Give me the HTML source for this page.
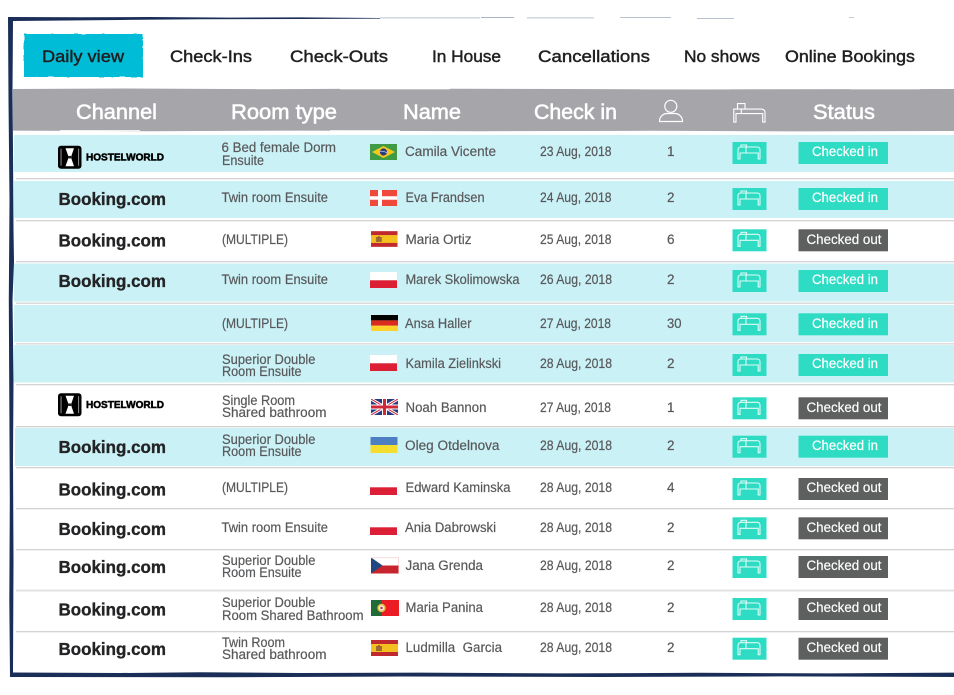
<!DOCTYPE html>
<html><head><meta charset="utf-8"><style>
html,body{margin:0;padding:0;background:#fff;width:954px;height:695px;overflow:hidden}
svg{display:block}
text{font-family:"Liberation Sans",sans-serif}
.n{font-size:17px;fill:#1f1f21;stroke:#1f1f21;stroke-width:.45px}
.h{font-size:21px;fill:#fff;stroke:#fff;stroke-width:.55px}
.t{font-size:13.5px;fill:#58595b;stroke:#58595b;stroke-width:.2px}
.w{font-size:13.5px;fill:#fff;stroke:#fff;stroke-width:.18px}
.b{font-size:17.5px;font-weight:bold;fill:#232325;stroke:#232325;stroke-width:.35px}
.hw{font-size:10px;font-weight:bold;fill:#000;stroke:#000;stroke-width:.5px}
</style></head><body>
<svg xmlns="http://www.w3.org/2000/svg" width="954" height="695" viewBox="0 0 954 695">
<defs>
<filter id="s" filterUnits="userSpaceOnUse" x="0" y="0" width="954" height="695"><feTurbulence type="fractalNoise" baseFrequency=".1 .2" numOctaves="2" seed="9"/><feDisplacementMap in="SourceGraphic" scale="1.6" xChannelSelector="R" yChannelSelector="G"/></filter>
<g id="bd" fill="none" stroke="#fff" stroke-opacity=".85" stroke-width="1.1"><path d="M5.5 17V8Q5.5 5 8.5 5H24.5Q27.5 5 27.5 8V17H25.7V11H7.5V17ZM8.5 5V3H14V5M13.5 5V11"/></g>
<g id="hb" fill="none" stroke="#fff" stroke-width="1.1"><path d="M.8 19.5V6.5H28Q32 6.5 32 10V19.5H29.7V11H3V19.5ZM4.5 6.5V1H12V6.5M8.3 6.5V11"/></g>
<g id="hwl"><rect width="23.5" height="23" rx="3" fill="#000"/><path d="M7.5 2.5H16L13.6 9.5V13.5L16 20.5H7.5L10 13.5V9.5Z" fill="#fff"/><path d="M10 10.2H13.6V12.8H10Z" fill="#222"/><rect x="2.5" y="3" width="1.1" height="17" fill="#888"/><rect x="20" y="3" width="1.1" height="17" fill="#888"/></g>
<symbol id="br" viewBox="0 0 27 16" overflow="visible"><rect width="27" height="16" fill="#3f9c45"/><path d="M13.5 2 25 8 13.5 14 2 8Z" fill="#f4c81e"/><circle cx="13.5" cy="8" r="3.6" fill="#2c3a86"/><path d="M10 7.3Q14 6.8 17 9" stroke="#dfe5f0" stroke-width=".6" fill="none"/></symbol>
<symbol id="dk" viewBox="0 0 27 16"><rect width="27" height="16" fill="#f1483c"/><path d="M8 0H12V16H8ZM0 6.2H27V9.8H0Z" fill="#fff"/></symbol>
<symbol id="es" viewBox="0 0 27 16"><rect width="27" height="16" fill="#c02a2e"/><rect y="4" width="27" height="8" fill="#f4c020"/><rect x="5" y="6" width="6" height="5" fill="#9c6b2f"/><rect x="7" y="5.3" width="2" height="1.5" fill="#b5422a"/></symbol>
<symbol id="pl" viewBox="0 0 27 16"><rect width="27" height="8.3" fill="#fff"/><rect y="8.3" width="27" height="7.7" fill="#dc1f35"/></symbol>
<symbol id="de" viewBox="0 0 27 16"><rect width="27" height="5.4" fill="#000"/><rect y="5.4" width="27" height="5.3" fill="#dd2a1f"/><rect y="10.7" width="27" height="5.3" fill="#fdd32b"/></symbol>
<symbol id="uk" viewBox="0 0 27 16"><rect width="27" height="16" fill="#2a3a7c"/><path d="M0 0 27 16M27 0 0 16" stroke="#fff" stroke-width="3"/><path d="M0 0 27 16M27 0 0 16" stroke="#d0283a" stroke-width="1"/><path d="M13.5 0V16M0 8H27" stroke="#fff" stroke-width="5"/><path d="M13.5 0V16M0 8H27" stroke="#d0283a" stroke-width="3"/></symbol>
<symbol id="ua" viewBox="0 0 27 16"><rect width="27" height="8" fill="#4f7fc3"/><rect y="8" width="27" height="8" fill="#f5dd2e"/></symbol>
<symbol id="cz" viewBox="0 0 28 16"><rect width="28" height="8" fill="#fff"/><rect y="8" width="28" height="8" fill="#c8242e"/><path d="M0 0 11.5 8 0 16Z" fill="#20477f"/><path d="M0 .3H27.7V15.7" fill="none" stroke="#f2c5cb" stroke-width=".6"/></symbol>
<symbol id="pt" viewBox="0 0 28 16"><rect width="28" height="16" fill="#eb1c24"/><rect width="11" height="16" fill="#226a37"/><circle cx="10.5" cy="8" r="4.2" fill="#e6c34a"/><circle cx="10.5" cy="8" r="2.6" fill="#f3e9e6"/><circle cx="10.5" cy="8" r="1.2" fill="#b8323a"/></symbol>
</defs>

<rect width="954" height="695" fill="#fff"/>

<!-- frame -->
<path fill="#1a2e57" d="M8 17 L80 17.3 L150 17 L230 17.6 L300 17.4 L380 18 L380 18.6 L300 19 L200 19.2 L120 20 L13 21 L12.5 90 L13 150 L13.5 230 L14 262 L12.5 300 L13.5 380 L13 460 L13.5 560 L13 672.5 L120 673 L200 672.3 L300 673 L420 672.6 L560 673.4 L700 672.8 L830 673.4 L954 672.6 V677 L780 676.4 L600 677 L400 676.5 L230 677.2 L10 677 L9.3 600 L9.8 500 L9.3 400 L8.8 300 L9.5 200 L8.5 100Z"/>
<g fill="#a9b3c6">
<rect x="380" y="17.5" width="100" height=".8"/><rect x="481" y="17" width="33" height="1"/><rect x="527" y="17.5" width="67" height=".8"/><rect x="620" y="17" width="51" height=".8"/><rect x="697" y="18" width="37" height=".8"/><rect x="849" y="17" width="5" height=".7"/>
</g>

<!-- tab -->
<rect filter="url(#s)" x="24" y="34" width="119" height="43" fill="#00bcd6"/>
<text class="n" x="42" y="62" textLength="82" lengthAdjust="spacingAndGlyphs">Daily view</text>
<text class="n" x="170" y="62" textLength="82" lengthAdjust="spacingAndGlyphs">Check-Ins</text>
<text class="n" x="290" y="62" textLength="98" lengthAdjust="spacingAndGlyphs">Check-Outs</text>
<text class="n" x="432" y="62" textLength="69" lengthAdjust="spacingAndGlyphs">In House</text>
<text class="n" x="538" y="62" textLength="112" lengthAdjust="spacingAndGlyphs">Cancellations</text>
<text class="n" x="684" y="62" textLength="76" lengthAdjust="spacingAndGlyphs">No shows</text>
<text class="n" x="785" y="62" textLength="130" lengthAdjust="spacingAndGlyphs">Online Bookings</text>

<!-- header -->
<path fill="#a6a6aa" d="M13 89 L120 88.5 L260 89.2 L400 88.6 L560 89 L700 89.4 L954 89 V131 L800 131.4 L650 130.8 L480 131.2 L300 130.6 L150 131.2 L13 130.6Z"/>
<g fill="#fff"><rect x="340" y="88.5" width="110" height=".8"/><rect x="640" y="88.6" width="90" height=".7"/><rect x="850" y="88.5" width="70" height=".8"/><rect x="60" y="130" width="80" height=".8"/><rect x="330" y="130.2" width="70" height=".7"/></g>
<text class="h" x="76" y="119" textLength="81" lengthAdjust="spacingAndGlyphs">Channel</text>
<text class="h" x="231" y="119" textLength="106" lengthAdjust="spacingAndGlyphs">Room type</text>
<text class="h" x="403" y="119" textLength="58" lengthAdjust="spacingAndGlyphs">Name</text>
<text class="h" x="534" y="119" textLength="83" lengthAdjust="spacingAndGlyphs">Check in</text>
<text class="h" x="813" y="119" textLength="62" lengthAdjust="spacingAndGlyphs">Status</text>
<g fill="none" stroke="#fff" stroke-width="1.2"><circle cx="670.8" cy="106.3" r="6"/><path d="M659.5 121.5C659.5 116 664 113.5 667 113.5H675C678 113.5 682.5 116 682.5 121.5Z"/></g>
<use href="#hb" x="733" y="102.6"/>

<!-- row backgrounds -->
<g fill="#caf1f6">
<rect x="14" y="135" width="940" height="37"/>
<rect x="14" y="181" width="940" height="37"/>
<rect x="14" y="263.5" width="940" height="38"/>
<rect x="14" y="305" width="940" height="37"/>
<rect x="14" y="345" width="940" height="37.5"/>
<rect x="15" y="428" width="939" height="38"/>
</g>
<g fill="#d3d3d6">
<rect x="16" y="178" width="938" height="1.3"/>
<rect x="16" y="220" width="938" height="1.3"/>
<rect x="16" y="261" width="938" height="1.3"/>
<rect x="16" y="302.5" width="938" height="1.3"/>
<rect x="16" y="343" width="938" height="1.6" fill="#dedee0"/>
<rect x="16" y="384" width="938" height="1.3"/>
<rect x="16" y="426" width="938" height="1.3"/>
<rect x="16" y="467" width="938" height="1.3"/>
<rect x="16" y="508" width="938" height="1.3"/>
<rect x="16" y="549" width="938" height="1.3"/>
<rect x="16" y="589.5" width="938" height="2" fill="#e2e2e4"/>
<rect x="16" y="631" width="938" height="1.3"/>
</g>

<!-- channel logos -->
<use href="#hwl" x="58" y="145.7"/>
<text class="hw" x="86" y="160.3" textLength="78" lengthAdjust="spacingAndGlyphs">HOSTELWORLD</text>
<use href="#hwl" x="58" y="393.2"/>
<text class="hw" x="86" y="408" textLength="78" lengthAdjust="spacingAndGlyphs">HOSTELWORLD</text>
<text class="b" x="58.5" y="205" textLength="107.5" lengthAdjust="spacingAndGlyphs">Booking.com</text>
<text class="b" x="58.5" y="246.5" textLength="107.5" lengthAdjust="spacingAndGlyphs">Booking.com</text>
<text class="b" x="58.5" y="287" textLength="107.5" lengthAdjust="spacingAndGlyphs">Booking.com</text>
<text class="b" x="58.5" y="453" textLength="107.5" lengthAdjust="spacingAndGlyphs">Booking.com</text>
<text class="b" x="58.5" y="495.5" textLength="107.5" lengthAdjust="spacingAndGlyphs">Booking.com</text>
<text class="b" x="58.5" y="535" textLength="107.5" lengthAdjust="spacingAndGlyphs">Booking.com</text>
<text class="b" x="58.5" y="573" textLength="107.5" lengthAdjust="spacingAndGlyphs">Booking.com</text>
<text class="b" x="58.5" y="615.5" textLength="107.5" lengthAdjust="spacingAndGlyphs">Booking.com</text>
<text class="b" x="58.5" y="655" textLength="107.5" lengthAdjust="spacingAndGlyphs">Booking.com</text>

<!-- room type -->
<text class="t" x="221.5" y="152" textLength="114.5" lengthAdjust="spacingAndGlyphs">6 Bed female Dorm</text>
<text class="t" x="222" y="165" textLength="42" lengthAdjust="spacingAndGlyphs">Ensuite</text>
<text class="t" x="221.5" y="202" textLength="106.5" lengthAdjust="spacingAndGlyphs">Twin room Ensuite</text>
<text class="t" x="222" y="244" textLength="66" lengthAdjust="spacingAndGlyphs">(MULTIPLE)</text>
<text class="t" x="221.5" y="284" textLength="106.5" lengthAdjust="spacingAndGlyphs">Twin room Ensuite</text>
<text class="t" x="222" y="328" textLength="66" lengthAdjust="spacingAndGlyphs">(MULTIPLE)</text>
<text class="t" x="222" y="364" textLength="93.5" lengthAdjust="spacingAndGlyphs">Superior Double</text>
<text class="t" x="222" y="376" textLength="79.5" lengthAdjust="spacingAndGlyphs">Room Ensuite</text>
<text class="t" x="222" y="405" textLength="73" lengthAdjust="spacingAndGlyphs">Single Room</text>
<text class="t" x="222" y="417" textLength="104.5" lengthAdjust="spacingAndGlyphs">Shared bathroom</text>
<text class="t" x="222" y="444" textLength="93.5" lengthAdjust="spacingAndGlyphs">Superior Double</text>
<text class="t" x="222" y="456" textLength="79.5" lengthAdjust="spacingAndGlyphs">Room Ensuite</text>
<text class="t" x="222" y="492" textLength="66" lengthAdjust="spacingAndGlyphs">(MULTIPLE)</text>
<text class="t" x="221.5" y="532" textLength="106.5" lengthAdjust="spacingAndGlyphs">Twin room Ensuite</text>
<text class="t" x="222" y="565" textLength="93.5" lengthAdjust="spacingAndGlyphs">Superior Double</text>
<text class="t" x="222" y="577" textLength="79.5" lengthAdjust="spacingAndGlyphs">Room Ensuite</text>
<text class="t" x="222" y="607" textLength="93.5" lengthAdjust="spacingAndGlyphs">Superior Double</text>
<text class="t" x="222" y="620" textLength="141.5" lengthAdjust="spacingAndGlyphs">Room Shared Bathroom</text>
<text class="t" x="222" y="647" textLength="63" lengthAdjust="spacingAndGlyphs">Twin Room</text>
<text class="t" x="222" y="659" textLength="104.5" lengthAdjust="spacingAndGlyphs">Shared bathroom</text>

<!-- flags -->
<use href="#br" x="370" y="144" width="27" height="16"/>
<use href="#dk" x="370" y="190" width="27" height="16"/>
<use href="#es" x="371" y="231" width="26.5" height="16"/>
<use href="#pl" x="370" y="272" width="27" height="16"/>
<use href="#de" x="371" y="315" width="27" height="16"/>
<use href="#pl" x="370" y="355" width="27" height="16"/>
<use href="#uk" x="371" y="399" width="27" height="16"/>
<use href="#ua" x="370.5" y="437" width="27" height="16"/>
<use href="#pl" x="370" y="479" width="27" height="16"/>
<use href="#pl" x="370" y="519" width="27" height="16"/>
<use href="#cz" x="371" y="557.5" width="28" height="16"/>
<use href="#pt" x="371" y="600" width="28" height="16"/>
<use href="#es" x="371" y="640" width="27" height="16"/>

<!-- names -->
<text class="t" x="405" y="156" textLength="91" lengthAdjust="spacingAndGlyphs">Camila Vicente</text>
<text class="t" x="405.5" y="202" textLength="79" lengthAdjust="spacingAndGlyphs">Eva Frandsen</text>
<text class="t" x="405.5" y="244" textLength="66" lengthAdjust="spacingAndGlyphs">Maria Ortiz</text>
<text class="t" x="405.5" y="284" textLength="114" lengthAdjust="spacingAndGlyphs">Marek Skolimowska</text>
<text class="t" x="405" y="328" textLength="66.5" lengthAdjust="spacingAndGlyphs">Ansa Haller</text>
<text class="t" x="405.5" y="368" textLength="95.5" lengthAdjust="spacingAndGlyphs">Kamila Zielinkski</text>
<text class="t" x="405.5" y="412" textLength="81" lengthAdjust="spacingAndGlyphs">Noah Bannon</text>
<text class="t" x="405" y="450" textLength="94.5" lengthAdjust="spacingAndGlyphs">Oleg Otdelnova</text>
<text class="t" x="405.5" y="492" textLength="105" lengthAdjust="spacingAndGlyphs">Edward Kaminska</text>
<text class="t" x="405" y="532" textLength="91" lengthAdjust="spacingAndGlyphs">Ania Dabrowski</text>
<text class="t" x="405.5" y="570" textLength="77.5" lengthAdjust="spacingAndGlyphs">Jana Grenda</text>
<text class="t" x="405.5" y="612" textLength="77.5" lengthAdjust="spacingAndGlyphs">Maria Panina</text>
<text class="t" x="405.5" y="652" textLength="96.5" lengthAdjust="spacingAndGlyphs">Ludmilla&#160; Garcia</text>

<!-- dates -->
<text class="t" x="540" y="156" textLength="71.5" lengthAdjust="spacingAndGlyphs">23 Aug, 2018</text>
<text class="t" x="540" y="202" textLength="71.5" lengthAdjust="spacingAndGlyphs">24 Aug, 2018</text>
<text class="t" x="540" y="244" textLength="71.5" lengthAdjust="spacingAndGlyphs">25 Aug, 2018</text>
<text class="t" x="540" y="284" textLength="72" lengthAdjust="spacingAndGlyphs">26 Aug, 2018</text>
<text class="t" x="540" y="328" textLength="71" lengthAdjust="spacingAndGlyphs">27 Aug, 2018</text>
<text class="t" x="540" y="368" textLength="72" lengthAdjust="spacingAndGlyphs">28 Aug, 2018</text>
<text class="t" x="540" y="412" textLength="71" lengthAdjust="spacingAndGlyphs">27 Aug, 2018</text>
<text class="t" x="540" y="450" textLength="72" lengthAdjust="spacingAndGlyphs">28 Aug, 2018</text>
<text class="t" x="540" y="492" textLength="72" lengthAdjust="spacingAndGlyphs">28 Aug, 2018</text>
<text class="t" x="540" y="532" textLength="72" lengthAdjust="spacingAndGlyphs">28 Aug, 2018</text>
<text class="t" x="540" y="570" textLength="72" lengthAdjust="spacingAndGlyphs">28 Aug, 2018</text>
<text class="t" x="540" y="612" textLength="72" lengthAdjust="spacingAndGlyphs">28 Aug, 2018</text>
<text class="t" x="540" y="652" textLength="72" lengthAdjust="spacingAndGlyphs">28 Aug, 2018</text>

<!-- persons -->
<text class="t" x="667" y="156">1</text>
<text class="t" x="667" y="202">2</text>
<text class="t" x="667" y="244">6</text>
<text class="t" x="667" y="284">2</text>
<text class="t" x="667" y="328" textLength="14.5" lengthAdjust="spacingAndGlyphs">30</text>
<text class="t" x="667" y="368">2</text>
<text class="t" x="667" y="412">1</text>
<text class="t" x="667" y="450">2</text>
<text class="t" x="667" y="492">4</text>
<text class="t" x="667" y="532">2</text>
<text class="t" x="667" y="570">2</text>
<text class="t" x="667" y="612">2</text>
<text class="t" x="667" y="652">2</text>

<!-- bed buttons -->
<g fill="#2edcc4">
<rect x="732.5" y="142" width="34" height="22"/>
<rect x="732.5" y="188" width="34" height="22"/>
<rect x="732.5" y="229.3" width="34" height="22"/>
<rect x="732.5" y="270" width="34" height="22"/>
<rect x="732.5" y="313.3" width="34" height="22"/>
<rect x="732.5" y="354" width="34" height="22"/>
<rect x="732.5" y="397.3" width="34" height="22"/>
<rect x="732.5" y="435.7" width="34" height="22"/>
<rect x="732.5" y="478" width="34" height="22"/>
<rect x="732.5" y="517.3" width="34" height="22"/>
<rect x="732.5" y="556" width="34" height="22"/>
<rect x="732.5" y="598" width="34" height="22"/>
<rect x="732.5" y="637.7" width="34" height="22"/>
</g>
<use href="#bd" x="732.5" y="142"/>
<use href="#bd" x="732.5" y="188"/>
<use href="#bd" x="732.5" y="229.3"/>
<use href="#bd" x="732.5" y="270"/>
<use href="#bd" x="732.5" y="313.3"/>
<use href="#bd" x="732.5" y="354"/>
<use href="#bd" x="732.5" y="397.3"/>
<use href="#bd" x="732.5" y="435.7"/>
<use href="#bd" x="732.5" y="478"/>
<use href="#bd" x="732.5" y="517.3"/>
<use href="#bd" x="732.5" y="556"/>
<use href="#bd" x="732.5" y="598"/>
<use href="#bd" x="732.5" y="637.7"/>

<!-- status -->
<g fill="#2edcc4">
<rect x="798.5" y="142" width="89.5" height="22"/>
<rect x="798.5" y="188" width="89.5" height="22"/>
<rect x="798.5" y="270" width="89.5" height="22"/>
<rect x="798.5" y="313.3" width="89.5" height="22"/>
<rect x="798.5" y="354" width="89.5" height="22"/>
<rect x="798.5" y="435.7" width="89.5" height="22"/>
</g>
<g fill="#5e5f5f">
<rect x="798.5" y="229.3" width="89.5" height="22"/>
<rect x="798.5" y="397.3" width="89.5" height="22"/>
<rect x="798.5" y="478" width="89.5" height="22"/>
<rect x="798.5" y="517.3" width="89.5" height="22"/>
<rect x="798.5" y="556" width="89.5" height="22"/>
<rect x="798.5" y="598" width="89.5" height="22"/>
<rect x="798.5" y="637.7" width="89.5" height="22"/>
</g>
<text class="w" x="812" y="156" textLength="66" lengthAdjust="spacingAndGlyphs">Checked in</text>
<text class="w" x="812" y="202" textLength="66" lengthAdjust="spacingAndGlyphs">Checked in</text>
<text class="w" x="806.5" y="244" textLength="75" lengthAdjust="spacingAndGlyphs">Checked out</text>
<text class="w" x="812" y="284" textLength="66" lengthAdjust="spacingAndGlyphs">Checked in</text>
<text class="w" x="812" y="328" textLength="66" lengthAdjust="spacingAndGlyphs">Checked in</text>
<text class="w" x="812" y="368" textLength="66" lengthAdjust="spacingAndGlyphs">Checked in</text>
<text class="w" x="806.5" y="412" textLength="75" lengthAdjust="spacingAndGlyphs">Checked out</text>
<text class="w" x="812" y="450" textLength="66" lengthAdjust="spacingAndGlyphs">Checked in</text>
<text class="w" x="806.5" y="492" textLength="75" lengthAdjust="spacingAndGlyphs">Checked out</text>
<text class="w" x="806.5" y="532" textLength="75" lengthAdjust="spacingAndGlyphs">Checked out</text>
<text class="w" x="806.5" y="570" textLength="75" lengthAdjust="spacingAndGlyphs">Checked out</text>
<text class="w" x="806.5" y="612" textLength="75" lengthAdjust="spacingAndGlyphs">Checked out</text>
<text class="w" x="806.5" y="652" textLength="75" lengthAdjust="spacingAndGlyphs">Checked out</text>
</svg>
</body></html>
